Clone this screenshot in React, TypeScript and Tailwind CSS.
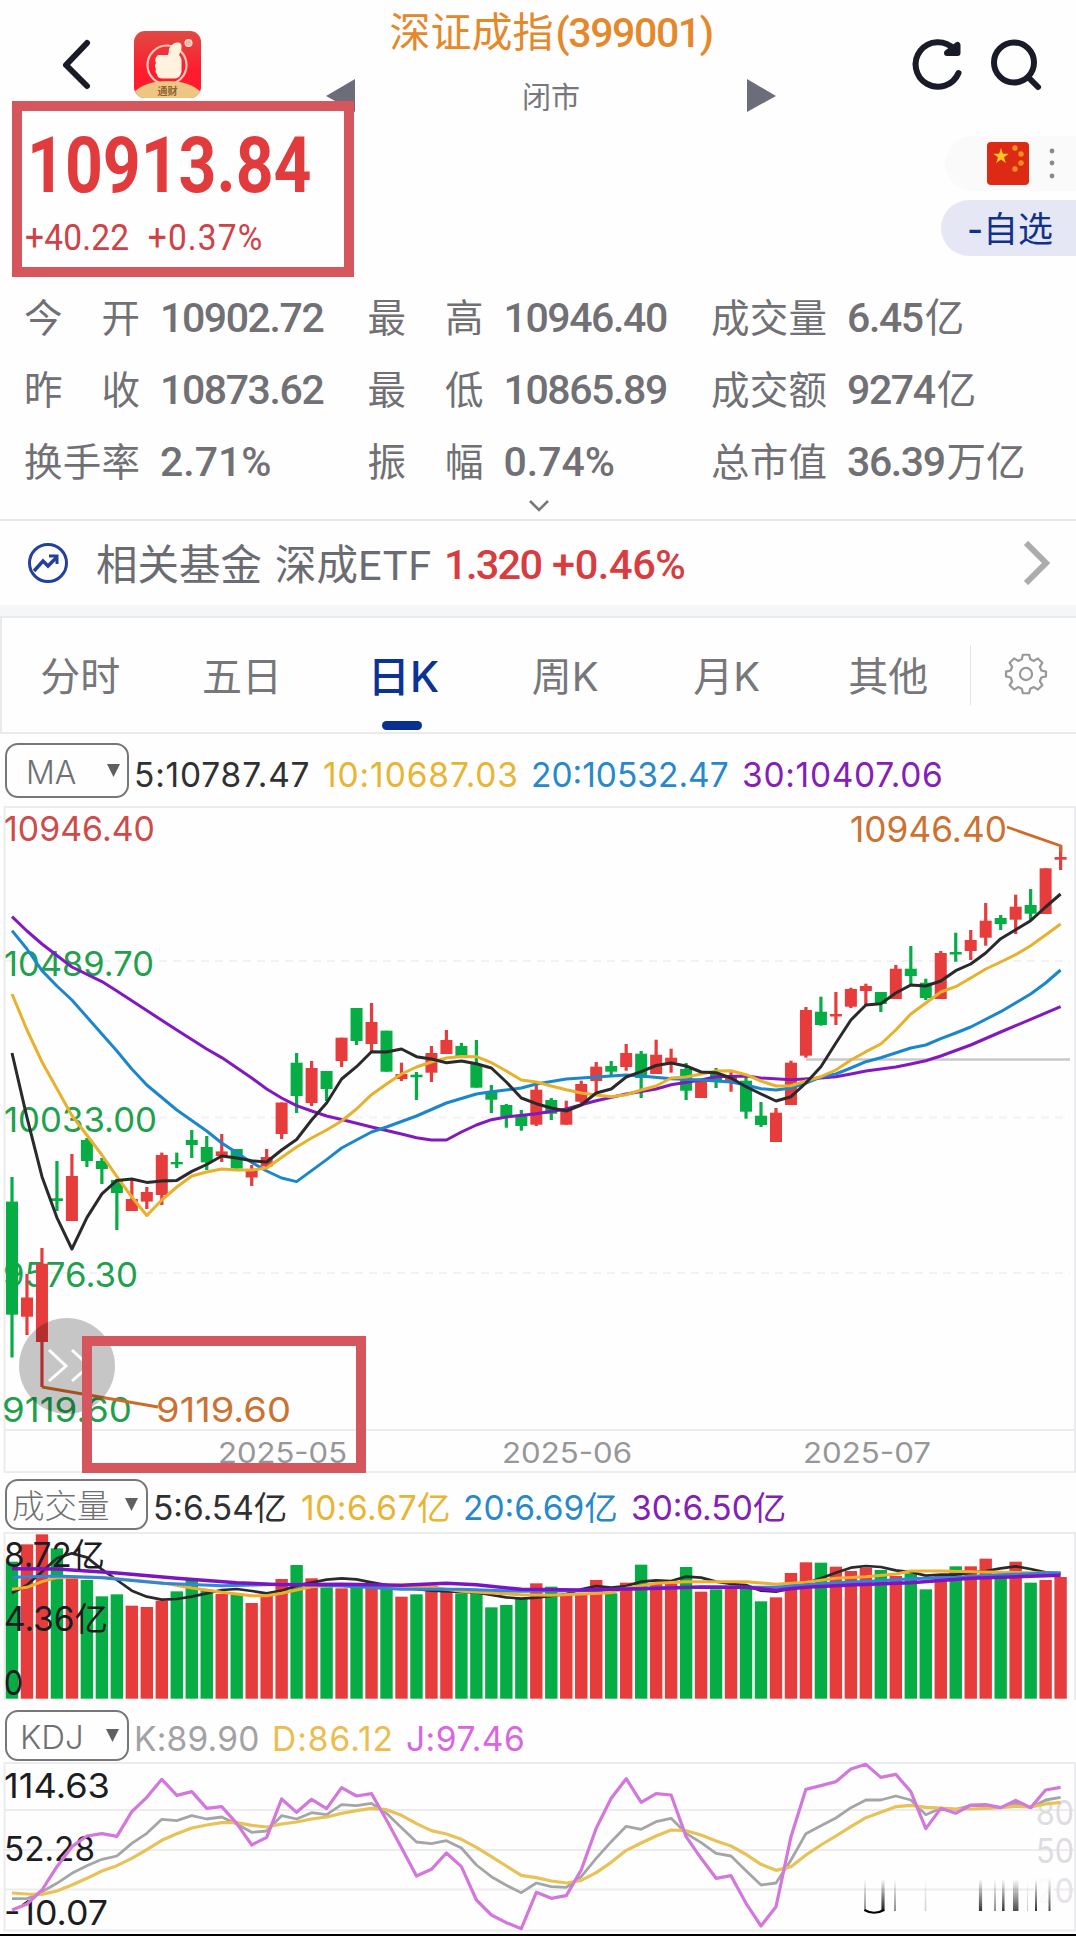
import React from 'react';
import clsx from 'clsx';

const UP = '#e73c3c';
const DOWN = '#06ad45';
const STEP = 14.98;

// [isUp, high, bodyTop, bodyBottom, low]
const CANDLES: [number, number, number, number, number][] = [
  [0, 1177, 1201.6, 1314.7, 1357.5], [1, 1274, 1297.5, 1316.7, 1335], [1, 1248, 1263.7, 1342, 1387],
  [0, 1161, 1198.3, 1201, 1211], [1, 1154, 1176, 1221, 1221], [0, 1138, 1140, 1161, 1167],
  [0, 1158, 1161, 1169, 1184], [0, 1179, 1180, 1193, 1230], [1, 1178, 1199, 1211, 1211],
  [1, 1187, 1192, 1201.6, 1209], [1, 1152.6, 1155, 1195, 1205], [0, 1152.6, 1162, 1164.3, 1168],
  [0, 1130, 1140, 1145, 1158], [0, 1136, 1147, 1162.4, 1170], [1, 1134, 1151.4, 1156, 1162],
  [0, 1149, 1149, 1168.6, 1168.6], [1, 1165, 1170, 1177.5, 1186], [1, 1149, 1157, 1166.5, 1169],
  [1, 1102.5, 1102.5, 1134, 1139], [0, 1053, 1062.7, 1096, 1113], [1, 1061, 1068, 1103, 1106],
  [0, 1071, 1071, 1089, 1101], [1, 1037.7, 1037.7, 1061, 1067], [0, 1008, 1008, 1041, 1045],
  [1, 1003, 1022, 1044, 1052.7], [0, 1030.7, 1030.7, 1071.7, 1071.7], [1, 1062.7, 1074, 1079, 1081],
  [0, 1072, 1074.7, 1077.3, 1100], [1, 1046, 1053, 1072.7, 1082], [1, 1030, 1040, 1054, 1054],
  [0, 1043, 1046, 1057, 1057], [0, 1040, 1064, 1087.7, 1087.7], [0, 1085, 1092, 1099.7, 1113],
  [0, 1104, 1105, 1116.7, 1127.7], [0, 1110, 1116, 1126, 1130.7], [1, 1082.7, 1089.7, 1124.7, 1126],
  [0, 1098, 1100, 1113.7, 1120], [1, 1100.7, 1110, 1124.7, 1124.7], [1, 1080.7, 1084, 1101.7, 1103],
  [1, 1062, 1066.7, 1081, 1094], [0, 1061, 1066, 1071.7, 1076.7], [1, 1044, 1053, 1067, 1070.7],
  [0, 1051, 1053.7, 1078, 1098], [1, 1039.7, 1054.7, 1074, 1074], [1, 1048.7, 1057.7, 1062.7, 1072.7],
  [0, 1063, 1069, 1090.7, 1100], [1, 1078.7, 1078.7, 1098, 1098], [0, 1068, 1073, 1080.7, 1088],
  [1, 1071.7, 1077, 1083, 1091.7], [0, 1075, 1080.7, 1111.7, 1118.7], [0, 1102, 1115.7, 1125, 1127],
  [1, 1108, 1112.7, 1142, 1142], [1, 1060.7, 1062.7, 1105, 1105], [1, 1007, 1010, 1055.7, 1057.7],
  [0, 996.7, 1011.7, 1025, 1025.7], [1, 992, 1014, 1016.5, 1025], [1, 987.7, 989, 1006.7, 1008],
  [1, 983.7, 986, 991, 1005], [0, 992, 992, 1004, 1012], [1, 965, 968.7, 999, 999],
  [0, 946, 968.7, 976, 985], [0, 978.7, 982.7, 998, 1000], [1, 951, 953, 999, 999],
  [0, 932.7, 952, 954.5, 961.7], [1, 930, 940, 951, 960], [1, 903, 920.7, 937.7, 945.7],
  [0, 915, 918, 924, 930], [1, 894.7, 906.7, 919.7, 934], [0, 889, 905, 913.7, 920],
  [1, 868.3, 868.3, 914, 914], [1, 846.7, 857, 859.7, 870],
];

// Moving averages, one value per candle
const MA5 = [
  1053, 1117.6, 1176.7, 1217.6, 1249, 1217.6, 1193.9, 1180.4, 1179, 1182.4, 1181, 1180.4, 1171.4, 1164.5, 1156, 1158,
  1160.8, 1162, 1150, 1139.5, 1120, 1103, 1079, 1066.7, 1051.7, 1052, 1049, 1056.7, 1059, 1062.7, 1061, 1063.7, 1068,
  1082, 1098, 1103.7, 1108, 1111, 1105, 1093, 1089, 1077, 1071.7, 1065.5, 1063, 1066, 1072, 1072.7, 1078, 1086.7, 1094,
  1101, 1096.7, 1083, 1066.7, 1043, 1020, 1005, 1003.7, 993, 985, 986, 981, 970.7, 964, 953, 938.7, 929.7, 920.7, 907, 894,
];

type Pt = [number, number];

const MA10: Pt[] = [
  [0, 994], [1, 1030], [2, 1062], [4, 1115.5], [6, 1155], [7, 1176.7], [8, 1197], [9, 1215.5], [10, 1200], [11, 1187],
  [12, 1176], [13, 1172], [14, 1169], [15, 1170], [16, 1170], [17, 1168], [18, 1157.6], [19, 1147], [20, 1138],
  [21, 1130], [22, 1121], [23, 1109], [24, 1094.7], [25, 1084], [26, 1074], [27, 1067], [28, 1062], [29, 1058],
  [30, 1056.5], [31, 1056.7], [32, 1062.7], [33, 1071], [34, 1080], [35, 1082], [36, 1086], [37, 1089.7], [38, 1093],
  [39, 1095], [40, 1096.7], [41, 1094.7], [42, 1090], [43, 1086], [44, 1078], [45, 1077], [46, 1074], [47, 1071],
  [48, 1070.7], [49, 1074.7], [50, 1081], [51, 1086], [52, 1085.7], [53, 1081], [54, 1076.7], [55, 1070], [56, 1060],
  [57, 1051.7], [58, 1044], [59, 1030], [60, 1014], [61, 1003], [62, 992], [63, 986.7], [64, 978], [65, 969], [66, 962],
  [67, 954.7], [68, 945.7], [69, 935], [70, 924],
];
const MA20: Pt[] = [
  [0, 930.6], [1, 949], [2, 970.6], [3, 986], [4, 1000], [6, 1034], [7, 1051], [8, 1069], [9, 1085], [11, 1110],
  [13, 1131], [14, 1143], [16, 1162.4], [17, 1171], [18, 1178], [19, 1181.6], [20, 1170.6], [21, 1159.6], [22, 1148],
  [23, 1140], [24, 1132], [25, 1127], [27, 1116], [29, 1103], [31, 1094], [32, 1091.7], [34, 1088], [35, 1084],
  [37, 1079], [39, 1077], [41, 1075], [42, 1076], [44, 1078.7], [46, 1080], [48, 1082], [49, 1085], [50, 1088.7],
  [51, 1090], [52, 1088], [53, 1083], [54, 1077], [55, 1074], [56, 1068], [57, 1061.7], [58, 1057.7], [60, 1048],
  [61, 1045], [62, 1038.7], [63, 1033], [64, 1027], [66, 1011.7], [68, 994], [69, 983], [70, 970],
];
const MA30: Pt[] = [
  [0, 916.7], [1, 931], [2, 944], [4, 967], [6, 981.6], [7, 991], [9, 1010.6], [11, 1030], [13, 1049], [14, 1057.6],
  [16, 1078], [17, 1089], [18, 1098], [19, 1105.7], [20, 1111], [21, 1116], [22, 1119.5], [24, 1127], [26, 1134],
  [27, 1137.7], [28, 1140], [29, 1140], [30, 1132], [31, 1125], [32, 1119.7], [33, 1117], [35, 1113.7], [37, 1109],
  [38, 1104.7], [39, 1100.7], [41, 1094], [43, 1089], [44, 1084.7], [46, 1080], [47, 1076.7], [49, 1076], [50, 1078],
  [52, 1079.7], [54, 1078], [55, 1076.7], [56, 1074], [57, 1071], [59, 1067], [60, 1064], [61, 1060.7], [62, 1056],
  [64, 1045], [66, 1032], [67, 1025.7], [70, 1006.7],
];

// Volume and KDJ values are offsets from the panel origin, in thirds of a pixel
const VOLUME = [
  275, 223, 193, 235, 318, 330, 379, 373, 407, 411, 392, 364, 330, 359, 372, 375, 399, 378, 327, 285, 325, 352, 355, 340,
  336, 355, 380, 373, 347, 365, 370, 365, 412, 405, 385, 340, 350, 375, 375, 330, 370, 338, 284, 340, 340, 291, 365, 358,
  355, 355, 394, 382, 309, 277, 278, 290, 303, 293, 300, 318, 310, 358, 318, 289, 289, 266, 315, 275, 338, 330, 321,
];
const VMA5: Pt[] = [
  [0, 369], [1, 345], [2, 305], [3, 265], [4, 250], [5, 262], [6, 298], [7, 330], [8, 362], [9, 380], [10, 389],
  [11, 387], [12, 380], [13, 370], [14, 360], [15, 357], [16, 363], [17, 370], [18, 362], [19, 347], [20, 338],
  [21, 329], [22, 325], [23, 328], [24, 337], [25, 345], [26, 352], [28, 362], [30, 366], [31, 367], [32, 375],
  [33, 382], [34, 386], [35, 383], [36, 378], [37, 372], [38, 358], [39, 348], [40, 353], [41, 348], [42, 335],
  [43, 331], [44, 333], [45, 320], [46, 323], [47, 335], [48, 342], [49, 345], [50, 362], [51, 365], [52, 355],
  [53, 340], [54, 325], [55, 308], [56, 293], [57, 288], [58, 291], [59, 301], [60, 306], [61, 317], [62, 314],
  [63, 314], [64, 308], [65, 303], [66, 295], [67, 289], [68, 297], [69, 307], [70, 310],
];
const VMA10: Pt[] = [
  [0, 358], [1, 352], [2, 335], [3, 323], [4, 321], [6, 322], [8, 330], [10, 338], [12, 354], [14, 367], [16, 377],
  [17, 377], [18, 370], [20, 350], [22, 344], [24, 350], [26, 352], [28, 352], [30, 364], [34, 374], [36, 376],
  [38, 372], [40, 368], [41, 355], [43, 340], [45, 335], [49, 335], [51, 343], [53, 337], [55, 325], [57, 320],
  [59, 312], [60, 303], [62, 303], [64, 305], [66, 307], [70, 310],
];
const VMA20: Pt[] = [
  [0, 322], [3, 318], [6, 323], [10, 340], [14, 347], [18, 343], [22, 348], [26, 358], [30, 358], [34, 364], [38, 362],
  [42, 355], [46, 352], [51, 352], [55, 338], [58, 332], [60, 326], [63, 322], [66, 314], [70, 308],
];
const VMA30: Pt[] = [
  [0, 296], [3, 297], [7, 309], [11, 325], [15, 338], [18, 344], [22, 343], [26, 346], [29, 340], [31, 344], [34, 358],
  [38, 360], [42, 356], [46, 351], [49, 352], [51, 361], [53, 352], [56, 345], [60, 338], [64, 325], [70, 316],
];

const K = [
  596, 596, 575, 550, 520, 497, 478, 468, 430, 400, 358, 362, 347, 357, 351, 372, 397, 393, 347, 357, 338, 344, 314, 317,
  310, 340, 383, 426, 431, 422, 444, 495, 530, 556, 578, 549, 560, 562, 530, 475, 425, 379, 388, 365, 355, 400, 428, 460,
  468, 512, 555, 549, 480, 401, 377, 354, 323, 300, 300, 288, 300, 344, 325, 328, 317, 317, 323, 311, 323, 300, 292,
];
const D = [
  579, 582, 583, 573, 555, 535, 513, 497, 475, 449, 421, 401, 384, 375, 368, 368, 376, 381, 372, 366, 357, 351, 340, 332,
  325, 329, 346, 371, 392, 402, 418, 442, 470, 498, 526, 533, 543, 549, 541, 518, 487, 451, 429, 408, 390, 392, 405, 423,
  438, 463, 493, 511, 500, 465, 435, 408, 380, 353, 337, 320, 316, 322, 324, 327, 327, 325, 323, 319, 321, 312, 307,
];
const J = [
  630, 612, 570, 500, 440, 408, 401, 409, 335, 292, 238, 286, 275, 325, 320, 370, 435, 412, 297, 337, 298, 326, 263, 288,
  281, 360, 443, 528, 508, 459, 500, 600, 645, 668, 686, 577, 595, 587, 510, 385, 295, 236, 307, 281, 285, 410, 475, 535,
  527, 610, 678, 620, 410, 268, 257, 245, 207, 193, 232, 223, 275, 386, 325, 340, 315, 314, 323, 301, 323, 270, 262,
];

const cx = (i: number) => 12 + i * STEP;
const poly = (pts: Pt[]) => pts.map(([i, y]) => `${cx(i).toFixed(1)},${y}`).join(' ');
const each = (ys: number[]): Pt[] => ys.map((y, i) => [i, y]);
const thirds = (pts: Pt[], base: number): Pt[] => pts.map(([i, y]) => [i, base + y / 3]);

const Line: React.FC<{ pts: Pt[]; color: string; width?: number }> = ({ pts, color, width = 3 }) => (
  <polyline points={poly(pts)} fill="none" stroke={color} strokeWidth={width} strokeLinejoin="round" />
);

const Label: React.FC<{ x: number; y: number; w: number; color: string; size?: number; children: string }> = ({
  x, y, w, color, size = 33.5, children,
}) => (
  <text x={x} y={y} fontSize={size} fill={color} textLength={w} lengthAdjust="spacingAndGlyphs">{children}</text>
);

const STATS = [
  [['今开', '10902.72', ''], ['最高', '10946.40', ''], ['成交量', '6.45', '亿']],
  [['昨收', '10873.62', ''], ['最低', '10865.89', ''], ['成交额', '9274', '亿']],
  [['换手率', '2.71%', ''], ['振幅', '0.74%', ''], ['总市值', '36.39', '万亿']],
];

const TABS = ['分时', '五日', '日K', '周K', '月K', '其他'];

const Select: React.FC<{ label: string; className: string }> = ({ label, className }) => (
  <button className={clsx('flex items-center justify-between shrink-0 rounded-[13px] border-2 border-[#77777a] text-[#707074] font-light', className)}>
    <span className="pt-[5px]">{label}</span>
    <svg width="13" height="13" viewBox="0 0 13 13"><path d="M0 0H13L6.5 13Z" fill="#606064" /></svg>
  </button>
);

const Legend: React.FC<{ items: [string, string, string][] }> = ({ items }) => (
  <>
    {items.map(([text, cls, box]) => (
      <span key={text} className={clsx('shrink-0 whitespace-nowrap', cls, box)}>{text}</span>
    ))}
  </>
);

const Header = () => (
  <header className="relative h-[282px]">
    <div className="flex h-[101px]">
      <svg className="ml-[60px] mt-[38px]" width="34" height="54" viewBox="0 0 34 54" fill="none" stroke="#191b29" strokeWidth="6" strokeLinecap="round" strokeLinejoin="round">
        <path d="M27 5L6 27L27 48" />
      </svg>
      <svg className="ml-10 mt-[31px]" width="67" height="67" viewBox="0 0 67 67">
        <defs>
          <linearGradient id="logo" x1="0" y1="0" x2="0" y2="1">
            <stop offset="0" stopColor="#e04a44" />
            <stop offset="0.6" stopColor="#ff1c2c" />
          </linearGradient>
          <clipPath id="logoClip"><rect width="67" height="67" rx="11" /></clipPath>
        </defs>
        <g clipPath="url(#logoClip)">
          <rect width="67" height="67" fill="url(#logo)" />
          <circle cx="33" cy="34" r="19.5" fill="none" stroke="#ffc9bf" strokeWidth="2.2" />
          <path d="M24 24H34Q35 21 35 18Q38 12 43 11.500Q48 11 47.500 16Q48 20 45 24Q48 27 47.500 31V41Q46 47 41 47.500H29Q23 47.500 23 43Q20.500 41 22 38Q20 35 22 32Q20 27 24 24Z" fill="#fff3e0" />
          <circle cx="54.500" cy="12" r="3.300" fill="#ffb0a4" stroke="#ffdcd4" strokeWidth="1.500" />
          <path d="M0 61Q12 50 33.500 50T67 61V67H0Z" fill="#eec684" />
          <text x="33.500" y="63.500" textAnchor="middle" fontSize="10" fontWeight="700" fill="#8c6432">通财</text>
        </g>
      </svg>
      <svg className="ml-[125px] mt-[78px]" width="29" height="35" viewBox="0 0 29 35"><path d="M0 18L29 1V34Z" fill="#6c6d7b" /></svg>
      <div className="w-[392px] flex flex-col items-center">
        <h1 className="mt-[7px] mr-[3px] flex items-baseline text-[41px] leading-[50px] text-[#e4882a] whitespace-nowrap">
          深证成指<span className="inline-block w-[156px] pl-[2px] font-['Roboto'] font-medium tracking-[-1.4px]">(399001)</span>
        </h1>
        <span className="mt-[20px] text-[29px] leading-[40px] text-[#77777c]">闭市</span>
      </div>
      <svg className="mt-[78px]" width="29" height="35" viewBox="0 0 29 35"><path d="M29 18L0 1V34Z" fill="#6c6d7b" /></svg>
      <svg className="ml-[134px] mt-[37px]" width="56" height="56" viewBox="0 0 56 56" fill="none" stroke="#191b29" strokeWidth="6" strokeLinecap="round" strokeLinejoin="round">
        <path d="M48.500 36A22.300 22.300 0 1 1 44 12" />
        <path d="M47.500 8V16H37Z" />
      </svg>
      <svg className="ml-[22px] mt-[37px]" width="56" height="56" viewBox="0 0 56 56" fill="none" stroke="#191b29" strokeWidth="6" strokeLinecap="round">
        <circle cx="26" cy="25.500" r="20" />
        <path d="M41 41L50 50" />
      </svg>
    </div>

    <div className="flex justify-between">
      <div className="pl-[27px] pt-[25px] font-['Roboto'] text-[#e13b3d]">
        <div className="origin-left scale-x-[0.858] text-[77px] leading-[80px] font-bold">10913.84</div>
        <div className="origin-left scale-x-[0.93] -ml-[2px] mt-[11px] flex gap-[20px] text-[36px] leading-[42px] text-[#cf4247]">
          <span className="tracking-[0.2px]">+40.22</span>
          <span className="tracking-[1.2px]">+0.37%</span>
        </div>
      </div>
      <div className="flex flex-col items-end pt-[35px]">
        <div className="flex items-center w-[131px] h-[55px] pl-[42px] gap-[20px] rounded-l-full bg-[#fafafb]">
          <svg width="42" height="43" viewBox="0 0 42 43">
            <rect width="42" height="43" rx="4" fill="#dc2a14" />
            <path d="M14 6L15.900 11.700L21.800 11.800L17 15.300L18.800 21L14 17.500L9.200 21L11 15.300L6.200 11.800L12.100 11.700Z" fill="#ffc51f" />
            <g fill="#f7931e">
              <circle cx="28" cy="6" r="2.700" /><circle cx="34" cy="12" r="2.700" />
              <circle cx="34" cy="21" r="2.700" /><circle cx="28" cy="27" r="2.700" />
            </g>
          </svg>
          <svg width="6" height="31" viewBox="0 0 6 31" fill="#8a8a8e">
            <circle cx="3" cy="3" r="2.400" /><circle cx="3" cy="15" r="2.400" /><circle cx="3" cy="28" r="2.400" />
          </svg>
        </div>
        <button className="mt-[9px] w-[135px] h-[56px] pl-[26px] pt-[2px] text-left rounded-l-full bg-[#e5e8f4] text-[#12318c] text-[35px] leading-[54px] whitespace-nowrap">
          <span className="inline-block w-[16px] font-medium">-</span>自选
        </button>
      </div>
    </div>
    <div className="absolute left-[11.5px] top-[101px] w-[342px] h-[176px] border-[10px] border-[#d5575d]" />
  </header>
);

const Stats = () => (
  <section className="h-[237px] pt-px">
    {STATS.map((row, r) => (
      <div key={r} className="flex h-[72px] items-center pl-[24px] text-[#707075]">
        {row.map(([label, num, unit], c) => (
          <div key={label} className={clsx('flex items-center', c < 2 ? 'w-[343.500px]' : 'w-[360px]')}>
            <span className="flex w-[116px] justify-between text-[38.500px]">
              {label.split('').map(ch => <span key={ch}>{ch}</span>)}
            </span>
            <span className="ml-[20px] flex items-baseline whitespace-nowrap">
              <span className={clsx("font-['Roboto'] font-medium text-[41px]", num.endsWith('%') ? 'tracking-[0px]' : 'tracking-[-1.4px]')}>{num}</span>
              <span className="ml-[2px] text-[39.500px]">{unit}</span>
            </span>
          </div>
        ))}
      </div>
    ))}
    <svg className="mx-auto relative left-[1px]" width="22" height="14" viewBox="0 0 22 14" fill="none" stroke="#77777a" strokeWidth="2.500"><path d="M2 2L11 11L20 2" /></svg>
  </section>
);

const Fund = () => (
  <section className="flex items-center h-[86px] border-t-2 border-[#e8e8ea] pl-[27px] pr-[24px] text-[41.500px] text-[#6b6c73] whitespace-nowrap">
    <svg width="42" height="42" viewBox="0 0 42 42" fill="none" stroke="#23409a" strokeWidth="3">
      <circle cx="21" cy="21" r="18.500" />
      <path d="M7 29L16 19L21 24L30 15" strokeWidth="3.500" />
      <path d="M22 14H30V22" strokeWidth="3" />
    </svg>
    <div className="flex pt-[6px]">
      <span className="ml-[27px] w-[179px]">相关基金</span>
      <span className="w-[169px]">深成<span className="font-['Roboto'] tracking-[0.7px]">ETF</span></span>
      <span className="flex font-['Roboto'] font-medium text-[#d83c3f]">
        <span className="w-[108px] tracking-[-1.700px]">1.320</span>
        <span className="tracking-[-0.4px]">+0.46%</span>
      </span>
    </div>
    <svg className="ml-auto" width="29" height="44" viewBox="0 0 29 44" fill="none" stroke="#acacae" strokeWidth="6"><path d="M3 2L23 22L3 42" /></svg>
  </section>
);

const Tabs = () => (
  <nav className="flex items-center h-[118px] border-y-2 border-l-2 border-[#e9eaec]">
    <div className="flex h-full -ml-[2px] w-[970px]">
      {TABS.map(tab => {
        const active = tab === '日K';
        return (
          <button
            key={tab}
            className={clsx('relative h-full w-[161.600px] pt-[4px] pr-px whitespace-nowrap', active ? 'text-[42.500px] font-medium text-[#0c3293]' : 'text-[40px] text-[#77777b]')}
          >
            {tab}
            {active && <span className="absolute left-[59px] bottom-0.5 w-10 h-[9px] rounded-full bg-[#0a2f92]" />}
          </button>
        );
      })}
    </div>
    <div className="w-px h-[60px] bg-[#e4e4e6]" />
    <svg className="ml-[33px] mb-[2px]" width="44" height="44" viewBox="0 0 24 24" fill="none" stroke="#98989b" strokeWidth="1.200" strokeLinejoin="round">
      <path d="M10.300 1.500h3.400l.6 2.500 2 .85 2.200-1.350 2.400 2.400-1.350 2.200.85 2 2.500.6v2.600l-2.500.6-.85 2 1.350 2.200-2.400 2.400-2.200-1.350-2 .85-.6 2.500h-3.400l-.6-2.500-2-.85-2.200 1.350-2.400-2.400 1.350-2.200-.85-2-2.500-.6v-2.600l2.500-.6.85-2L3.100 5.900l2.400-2.400 2.200 1.350 2-.85z" />
      <circle cx="12" cy="12" r="3.300" />
    </svg>
  </nav>
);

const PriceChart = () => (
  <div className="relative">
    <svg className="block" width="1076" height="668" viewBox="0 806 1076 668">
      <g fill="none" stroke="#ececee" strokeWidth="2">
        <path d="M4.500 1472V807H1075V1472Z" />
        <path d="M4 1430H1075" />
        <path d="M5 961H1070M5 1117.500H1070M5 1273H1070" stroke="#f2f2f3" strokeDasharray="8 6" />
      </g>
      <Label x={4} y={841} w={151} color="#cf4a4a">10946.40</Label>
      <Label x={4} y={975.5} w={150} color="#1fa04c">10489.70</Label>
      <Label x={4} y={1131.5} w={153} color="#1fa04c">10033.00</Label>
      <Label x={3} y={1287} w={135} color="#1fa04c">9576.30</Label>
      <Label x={2} y={1421.5} w={130} color="#1fa04c">9119.60</Label>
      <Label x={218} y={1462.5} w={129} color="#97979a" size={28}>2025-05</Label>
      <Label x={502} y={1462.5} w={130} color="#97979a" size={28}>2025-06</Label>
      <Label x={803} y={1462.5} w={128} color="#97979a" size={28}>2025-07</Label>
      <path d="M806 1059.500H1070" stroke="#c9c9ca" strokeWidth="2.500" />
      {CANDLES.map(([up, hi, top, bot, lo], i) => (
        <g key={i} fill={up ? UP : DOWN}>
          <rect x={cx(i) - 1.6} y={hi} width={3.2} height={lo - hi} />
          <rect x={cx(i) - 6} y={top} width={12} height={bot - top} />
        </g>
      ))}
      <Line pts={MA30} color="#8218c0" />
      <Line pts={MA20} color="#1c86cc" />
      <Line pts={MA10} color="#e8b12c" />
      <Line pts={each(MA5)} color="#2a2a2c" />
      <g fill="none" stroke="#cf6a28" strokeWidth="2.800">
        <path d="M1007 827L1061 846V852" />
        <path d="M42 1387L158 1407" />
      </g>
      <Label x={850} y={842} w={157} color="#cc7231" size={35}>10946.40</Label>
      <Label x={156} y={1421.5} w={135} color="#cc7231">9119.60</Label>
      <circle cx="67" cy="1366" r="48" fill="#000" opacity="0.22" />
      <path d="M49 1350L66 1366L49 1381M72 1350L89 1366L72 1381" fill="none" stroke="#fff" strokeWidth="3" />
    </svg>
    <div className="absolute left-[82px] top-[530px] w-[284px] h-[137px] border-[10px] border-[#d5575d]" />
  </div>
);

const VolumeChart = () => (
  <svg className="block" width="1076" height="170" viewBox="0 1532 1076 170">
    <path d="M4.500 1700V1533H1075V1700" fill="none" stroke="#ececee" strokeWidth="2" />
    {VOLUME.map((v, i) => (
      <rect key={i} x={cx(i) - 6.2} y={1470 + v / 3} width={12.4} height={228.7 - v / 3} fill={CANDLES[i][0] ? UP : DOWN} />
    ))}
    <Line pts={thirds(VMA5, 1470)} color="#2a2a2c" width={2.7} />
    <Line pts={thirds(VMA10, 1470)} color="#efae2c" />
    <Line pts={thirds(VMA20, 1470)} color="#2f86dc" />
    <Line pts={thirds(VMA30, 1470)} color="#7d14c4" width={3.5} />
    <Label x={4} y={1567} w={101} color="#1c1c22">8.72亿</Label>
    <Label x={4} y={1631} w={104} color="#1c1c22">4.36亿</Label>
    <Label x={4} y={1695} w={19} color="#1c1c22">0</Label>
  </svg>
);

// [x, width, opacity]
const STREAKS = [
  [865, 1.8, 0.5], [883, 3.2, 0.9], [895, 1.8, 0.5], [925.500, 1.5, 0.2], [980.500, 3.2, 0.8], [995, 1.8, 0.5],
  [1003.300, 2.500, 0.8], [1015.700, 5.500, 0.7], [1027.500, 1, 0.2], [1036, 2, 0.8], [1049.500, 2, 0.7],
];

const KdjChart = () => (
  <svg className="block" width="1076" height="172" viewBox="0 1762 1076 172">
    <defs>
      <linearGradient id="fade" x1="0" y1="0" x2="0" y2="1">
        <stop offset="0" stopColor="#000" stopOpacity="0" />
        <stop offset="1" stopColor="#000" />
      </linearGradient>
    </defs>
    <g fill="none" stroke="#ececee" strokeWidth="2">
      <path d="M4.500 1930.500V1763H1075V1930.500Z" />
      <path d="M5 1810H1075M5 1850H1075M5 1889.500H1075" />
    </g>
    <Label x={1036} y={1825} w={38} color="#dfdce1">80</Label>
    <Label x={1036} y={1863} w={38} color="#dfdce1">50</Label>
    <Label x={1036} y={1903} w={38} color="#e6e3e8">20</Label>
    <Label x={4} y={1797.5} w={106} color="#1c1c22">114.63</Label>
    <Label x={4} y={1860.5} w={91} color="#1c1c22">52.28</Label>
    <Label x={4} y={1924.5} w={104} color="#1c1c22">-10.07</Label>
    <Line pts={thirds(each(K), 1700)} color="#a3a5a6" width={2.8} />
    <Line pts={thirds(each(D), 1700)} color="#e8c257" width={3.2} />
    <Line pts={thirds(each(J), 1700)} color="#d377dc" width={3.2} />
    <rect x="1034" y="1878" width="20" height="34" fill="#fdfdfd" opacity="0.85" />
    {STREAKS.map(([x, w, o]) => (
      <rect key={x} x={x - w / 2} y={1879} width={w} height={32} fill="url(#fade)" opacity={o} />
    ))}
    <path d="M864.500 1910Q874 1915.500 884 1910" fill="none" stroke="#000" strokeWidth="2.200" />
  </svg>
);

const App: React.FC = () => (
  <div className="w-[1076px] h-[1936px] overflow-hidden flex flex-col bg-[#fefefe] font-['Inter','Noto_Sans_CJK_SC',sans-serif]">
    <Header />
    <Stats />
    <Fund />
    <div className="h-[11px] bg-[#f5f6f7]" />
    <Tabs />

    <div className="flex items-center h-[72px] pl-[5px] text-[33.500px]">
      <Select label="MA" className="w-[124px] h-[55px] pl-[19px] pr-[7px] text-[32px]" />
      <Legend
        items={[
          ['5:10787.47', 'ml-[5px] pt-[10px] tracking-[0.8px] text-[#303032]', 'w-[189px]'],
          ['10:10687.03', 'pt-[10px] tracking-[0.9px] text-[#e9b432]', 'w-[208px]'],
          ['20:10532.47', 'pt-[10px] text-[#2788cc]', 'w-[211px]'],
          ['30:10407.06', 'pt-[10px] tracking-[0.7px] text-[#8420b8]', 'w-[204px]'],
        ]}
      />
    </div>
    <PriceChart />

    <div className="flex items-center h-[58px] pt-[3px] pl-[5px] text-[33.500px]">
      <Select label="成交量" className="w-[143px] h-[51px] pl-[5px] pr-[8px] text-[32.500px]" />
      <Legend
        items={[
          ['5:6.54亿', 'ml-[5px] pt-[8px] text-[#303032]', 'w-[148px]'],
          ['10:6.67亿', 'pt-[8px] tracking-[0.5px] text-[#e9b432]', 'w-[162px]'],
          ['20:6.69亿', 'pt-[8px] text-[#2788cc]', 'w-[168px]'],
          ['30:6.50亿', 'pt-[8px] text-[#8420b8]', 'w-[160px]'],
        ]}
      />
    </div>
    <VolumeChart />

    <div className="flex items-center h-[60px] pt-[7px] pl-[5px] text-[33.500px]">
      <Select label="KDJ" className="w-[124px] h-[51px] pl-[13px] pr-[8px] text-[33px]" />
      <Legend
        items={[
          ['K:89.90', 'ml-[5px] pt-[7px] tracking-[0.2px] text-[#a2a2a4]', 'w-[138px]'],
          ['D:86.12', 'pt-[7px] tracking-[1px] text-[#eabd4d]', 'w-[134px]'],
          ['J:97.46', 'pt-[7px] tracking-[0.5px] text-[#d965e0]', 'w-[130px]'],
        ]}
      />
    </div>
    <KdjChart />
    <div className="h-[2px] bg-black" />
  </div>
);

export default App;
